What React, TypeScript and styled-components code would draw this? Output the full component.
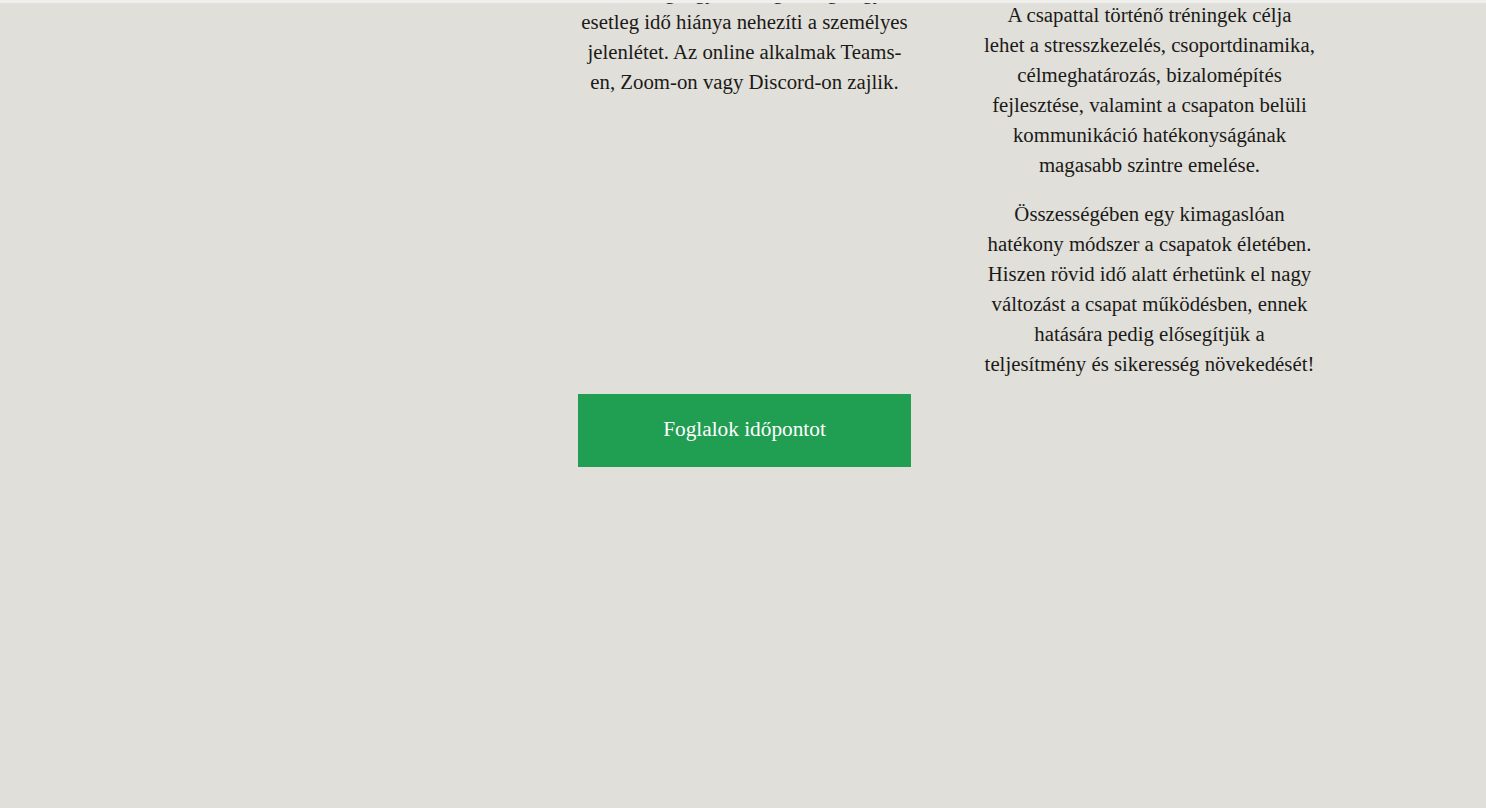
import React from "react";
import styled, { createGlobalStyle } from "styled-components";

const Global = createGlobalStyle`
  html, body { margin: 0; padding: 0; }
  body {
    background: #e0dfda;
    font-family: "Liberation Serif", "DejaVu Serif", serif;
    color: #1b1a17;
    overflow: hidden;
  }
`;

const Page = styled.div`
  position: relative;
  width: 100%;
  height: 808px;
  overflow: hidden;
`;

const TopStrip = styled.div`
  position: absolute;
  top: 0;
  left: 0;
  right: 0;
  height: 3px;
  background: #efefed;
`;

const Grid = styled.div`
  width: 1146px;
  margin: -23px auto 0;
  display: grid;
  grid-template-columns: 333px 333px 333px;
  justify-content: end;
  column-gap: 72px;
  row-gap: 15px;
`;

const Column = styled.div<{ $offset?: number }>`
  padding-top: ${(p) => p.$offset ?? 0}px;
  text-align: center;
`;

const Para = styled.p`
  margin: 0 0 19px;
  font-size: 20.8px;
  line-height: 30px;
  white-space: nowrap;
  &:last-child { margin-bottom: 0; }
`;

const ButtonCell = styled.div`
  grid-column: 2;
`;

const BookButton = styled.button`
  display: flex;
  align-items: center;
  justify-content: center;
  width: 333px;
  height: 73px;
  border: none;
  background: #209e52;
  color: #ffffff;
  font-family: "Liberation Serif", "DejaVu Serif", serif;
  font-size: 21.3px;
  cursor: pointer;
  padding: 0 0 2px;
`;

const lines = (arr: string[]) =>
  arr.map((l, i) => (
    <React.Fragment key={i}>
      {l}
      {i < arr.length - 1 && <br />}
    </React.Fragment>
  ));

export default function App() {
  return (
    <>
      <Global />
      <Page>
        <Grid>
          <Column />
          <Column>
            <Para>
              {lines([
                "távolság, egyéb elfoglaltság vagy",
                "esetleg idő hiánya nehezíti a személyes",
                "jelenlétet. Az online alkalmak Teams-",
                "en, Zoom-on vagy Discord-on zajlik.",
              ])}
            </Para>
          </Column>
          <Column $offset={23}>
            <Para>
              {lines([
                "A csapattal történő tréningek célja",
                "lehet a stresszkezelés, csoportdinamika,",
                "célmeghatározás, bizalomépítés",
                "fejlesztése, valamint a csapaton belüli",
                "kommunikáció hatékonyságának",
                "magasabb szintre emelése.",
              ])}
            </Para>
            <Para>
              {lines([
                "Összességében egy kimagaslóan",
                "hatékony módszer a csapatok életében.",
                "Hiszen rövid idő alatt érhetünk el nagy",
                "változást a csapat működésben, ennek",
                "hatására pedig elősegítjük a",
                "teljesítmény és sikeresség növekedését!",
              ])}
            </Para>
          </Column>
          <ButtonCell>
            <BookButton>Foglalok időpontot</BookButton>
          </ButtonCell>
        </Grid>
        <TopStrip />
      </Page>
    </>
  );
}
